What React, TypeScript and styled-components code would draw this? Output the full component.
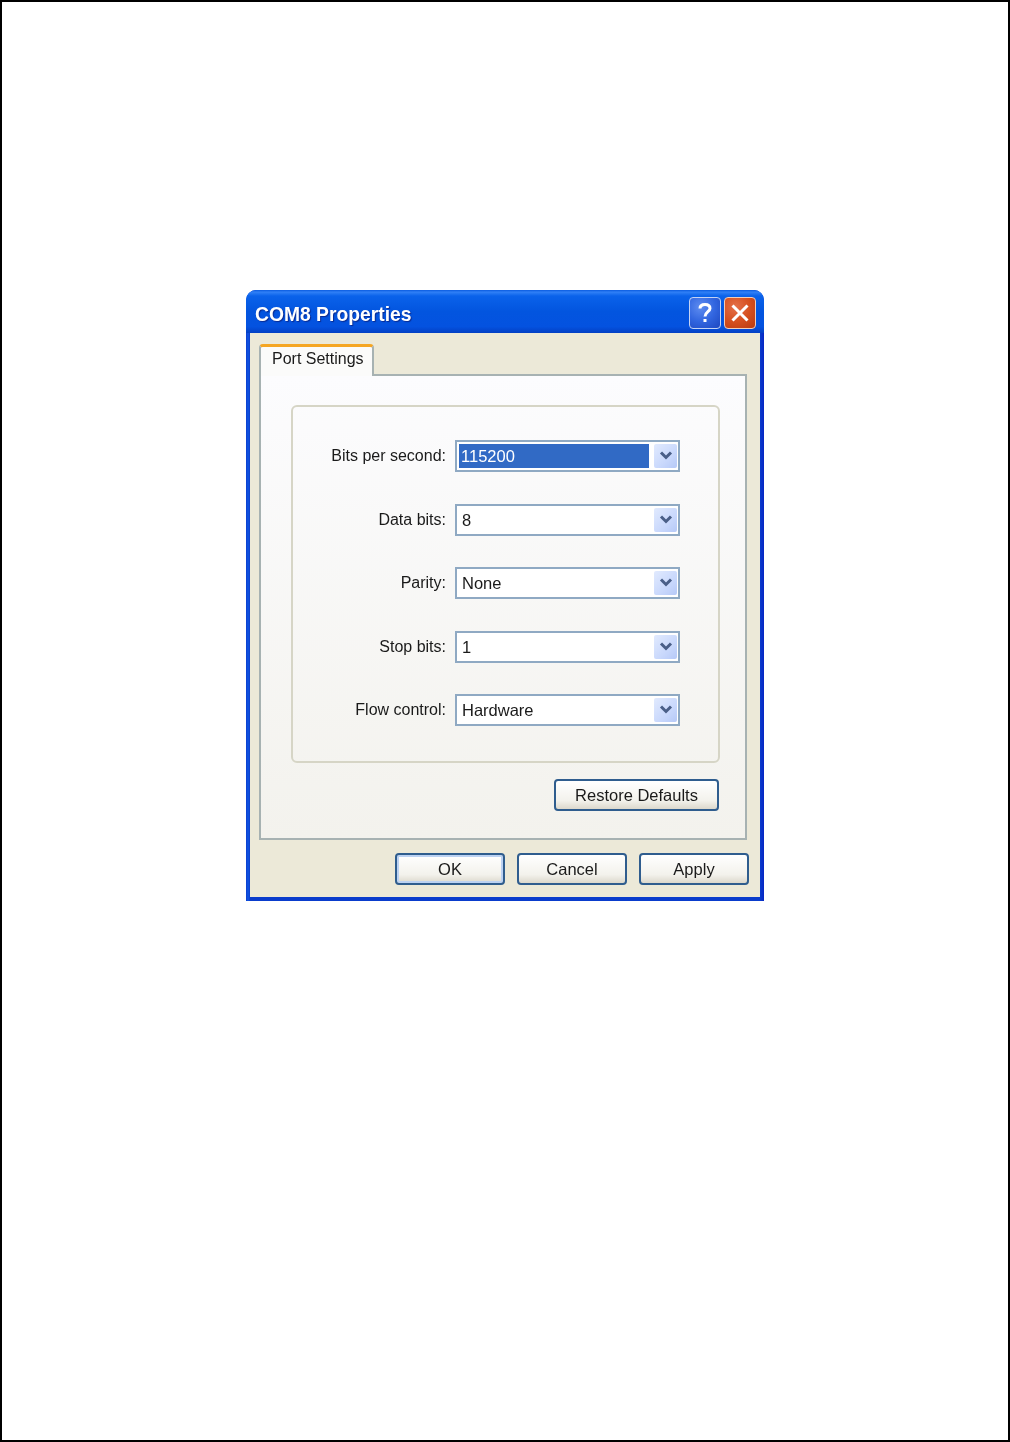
import React from "react";
import styled, { createGlobalStyle } from "styled-components";

const GlobalStyle = createGlobalStyle`
  html, body {
    margin: 0;
    padding: 0;
    background: #fff;
  }
  * {
    box-sizing: border-box;
  }
`;

const Page = styled.div`
  width: 1010px;
  height: 1442px;
  border: 2px solid #000;
  background: #fff;
  display: flex;
  justify-content: center;
  align-items: flex-start;
  padding-top: 288px;
  font-family: "Liberation Sans", Arial, sans-serif;
  color: #1a1a1a;
`;

const Window = styled.div`
  width: 518px;
  height: 611px;
  background: linear-gradient(90deg, #0a3ccc 0, #0f55e4 2px, #0a3ccc 4px, #0a3ccc 514px, #0626c4 100%);
  border-radius: 10px 10px 0 0;
  padding: 0 4px 4px;
  display: flex;
  flex-direction: column;
  filter: blur(0.4px);
`;

const TitleBar = styled.div`
  height: 43px;
  margin: 0 -4px;
  padding: 6px 8px 0 9px;
  border-radius: 10px 10px 0 0;
  display: flex;
  align-items: center;
  justify-content: space-between;
  background: linear-gradient(
    180deg,
    #0a5be0 0,
    #3080f6 5%,
    #0a62ea 14%,
    #0355df 50%,
    #0452e0 85%,
    #0340c4 100%
  );
`;

const Title = styled.div`
  font-size: 19.3px;
  font-weight: 700;
  color: #fff;
  text-shadow: 1px 1px 1px #0a2a90;
`;

const Controls = styled.div`
  display: flex;
  gap: 3px;
  margin-top: -3px;
`;

const CaptionButton = styled.div<{ $close?: boolean }>`
  width: 32px;
  height: 32px;
  border: 1px solid ${(p) => (p.$close ? "#f2cdb8" : "#c4d3f4")};
  border-radius: 4px;
  display: flex;
  align-items: center;
  justify-content: center;
  background: ${(p) =>
    p.$close
      ? "radial-gradient(circle at 35% 30%, #e4714a 0, #d6501f 50%, #b93a10 100%)"
      : "radial-gradient(circle at 35% 30%, #5f8df0 0, #3266e0 50%, #1e48c0 100%)"};
`;

const Body = styled.div`
  flex: 1;
  background: #ece9d8;
  padding: 11px 13px 0 9px;
  display: flex;
  flex-direction: column;
`;

const TabStrip = styled.div`
  height: 30px;
  display: flex;
  position: relative;
  z-index: 1;
`;

const Tab = styled.div`
  width: 115px;
  height: 32px;
  background: #fbfbfa;
  border: 2px solid #a7b2b2;
  border-top: 3px solid #f5a623;
  border-bottom: 0;
  border-radius: 4px 4px 0 0;
  padding: 1px 0 0 11px;
  font-size: 16px;
  line-height: 22px;
  white-space: nowrap;
`;

const TabPanel = styled.div`
  width: 488px;
  height: 466px;
  border: 2px solid #a7b2b2;
  background: linear-gradient(180deg, #fcfcfe 0, #f3f2ed 100%);
  padding: 29px 26px 0 30px;
`;

const Group = styled.div`
  width: 429px;
  height: 358px;
  border: 2px solid #d6d5c6;
  border-radius: 6px;
  padding-top: 33px;
  display: flex;
  flex-direction: column;
  gap: 31.5px;
`;

const Row = styled.div`
  height: 32px;
  display: flex;
  align-items: center;
`;

const Label = styled.div`
  width: 153px;
  text-align: right;
  font-size: 16px;
  line-height: 20px;
  white-space: nowrap;
`;

const Select = styled.div`
  width: 225px;
  height: 32px;
  margin-left: 9px;
  background: #fff;
  border: 2px solid #8fa9c3;
  padding: 2px 1px 2px 2px;
  display: flex;
  align-items: stretch;
  justify-content: space-between;
`;

const Value = styled.div<{ $selected?: boolean }>`
  width: 190px;
  padding-left: ${(p) => (p.$selected ? "2px" : "3px")};
  font-size: 16.5px;
  line-height: 25px;
  background: ${(p) => (p.$selected ? "#316ac5" : "transparent")};
  color: ${(p) => (p.$selected ? "#fff" : "#1a1a1a")};
`;

const Arrow = styled.div`
  width: 23px;
  border-radius: 2px;
  background: linear-gradient(135deg, #e1eafe 0, #c9d8fc 60%, #b6c9f7 100%);
  display: flex;
  align-items: center;
  justify-content: center;
`;

const RestoreRow = styled.div`
  display: flex;
  justify-content: flex-end;
  margin-top: 16px;
`;

const Button = styled.div<{ $default?: boolean; $width: number }>`
  width: ${(p) => p.$width}px;
  height: 32px;
  border: 2px solid #2f5d8e;
  border-radius: 4px;
  background: linear-gradient(180deg, #ffffff 0, #f3f2ec 70%, #dcd8cc 100%);
  box-shadow: ${(p) =>
    p.$default ? "inset 0 0 0 2px #bcd2f2" : "none"};
  display: flex;
  align-items: center;
  justify-content: center;
  font-size: 16.5px;
`;

const Footer = styled.div`
  display: flex;
  justify-content: flex-end;
  gap: 12px;
  margin-top: 13px;
  margin-right: -2px;
`;

const fields = [
  { label: "Bits per second:", value: "115200", selected: true },
  { label: "Data bits:", value: "8" },
  { label: "Parity:", value: "None" },
  { label: "Stop bits:", value: "1" },
  { label: "Flow control:", value: "Hardware" },
];

function ChevronDown() {
  return (
    <svg width="14" height="12" viewBox="0 0 14 12">
      <path d="M2 2.5 L7 7.5 L12 2.5" fill="none" stroke="#4a5f88" strokeWidth="3" />
    </svg>
  );
}

function CloseIcon() {
  return (
    <svg width="20" height="20" viewBox="0 0 20 20">
      <path d="M2.5 2.5 L17.5 17.5 M17.5 2.5 L2.5 17.5" fill="none" stroke="#fff" strokeWidth="3" />
    </svg>
  );
}

function HelpIcon() {
  return (
    <svg width="14" height="20" viewBox="0 0 14 20">
      <path
        d="M2 5.5 C2 2.5 4.5 1.5 7 1.5 C10 1.5 12 3 12 5.5 C12 8.5 7 9 7 13.5"
        fill="none"
        stroke="#fff"
        strokeWidth="3"
      />
      <rect x="5.5" y="16" width="3" height="3" fill="#fff" />
    </svg>
  );
}

export default function App() {
  return (
    <Page>
      <GlobalStyle />
      <Window>
        <TitleBar>
          <Title>COM8 Properties</Title>
          <Controls>
            <CaptionButton>
              <HelpIcon />
            </CaptionButton>
            <CaptionButton $close>
              <CloseIcon />
            </CaptionButton>
          </Controls>
        </TitleBar>
        <Body>
          <TabStrip>
            <Tab>Port Settings</Tab>
          </TabStrip>
          <TabPanel>
            <Group>
              {fields.map((f) => (
                <Row key={f.label}>
                  <Label>{f.label}</Label>
                  <Select>
                    <Value $selected={f.selected}>{f.value}</Value>
                    <Arrow>
                      <ChevronDown />
                    </Arrow>
                  </Select>
                </Row>
              ))}
            </Group>
            <RestoreRow>
              <Button $width={165}>Restore Defaults</Button>
            </RestoreRow>
          </TabPanel>
          <Footer>
            <Button $width={110} $default>
              OK
            </Button>
            <Button $width={110}>Cancel</Button>
            <Button $width={110}>Apply</Button>
          </Footer>
        </Body>
      </Window>
    </Page>
  );
}
